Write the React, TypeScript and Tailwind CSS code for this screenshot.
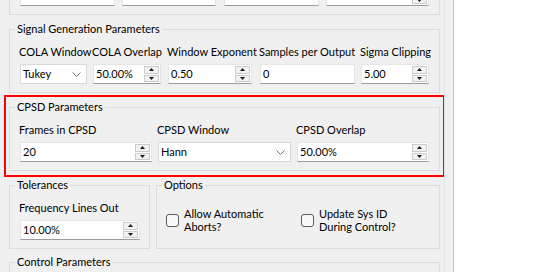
import React from 'react';

const font = "font-['Lato',sans-serif]";

const UpArrow = () => (
  <svg width="5" height="3" viewBox="0 0 5 3"><path d="M0 3 L2.5 0 L5 3 Z" fill="#1a1a1a" /></svg>
);
const DownArrow = () => (
  <svg width="5" height="3" viewBox="0 0 5 3"><path d="M0 0 L2.5 3 L5 0 Z" fill="#1a1a1a" /></svg>
);

const Spin = ({ value, w }: { value: string; w: string }) => (
  <div className={`flex h-[20px] ${w} bg-white border border-[#e6e6e6] border-b-[#9c9c9c]`}>
    <span className="flex-1 pl-[2px] leading-[18px] whitespace-nowrap overflow-hidden">{value}</span>
    <div className="flex flex-col w-[15px] my-px mr-px gap-px">
      <div className="flex-1 flex items-center justify-center bg-[#f2f2f2] border border-[#cccccc]"><UpArrow /></div>
      <div className="flex-1 flex items-center justify-center bg-[#f2f2f2] border border-[#cccccc]"><DownArrow /></div>
    </div>
  </div>
);

const TextBox = ({ value, w }: { value: string; w: string }) => (
  <div className={`h-[20px] ${w} bg-white border border-[#e6e6e6] border-b-[#9c9c9c] pl-[2px] leading-[18px]`}>
    {value}
  </div>
);

const Combo = ({ value, w }: { value: string; w: string }) => (
  <div className={`flex items-center h-[20px] ${w} bg-white border border-[#d9d9d9] pl-[2px]`}>
    <span className="flex-1 leading-[18px]">{value}</span>
    <svg width="9" height="5" viewBox="0 0 9 5" className="mr-[5px]">
      <path d="M0.5 0.5 L4.5 4.5 L8.5 0.5" fill="none" stroke="#707070" strokeWidth="1" />
    </svg>
  </div>
);

const Group = ({ title, className, children }: { title: string; className?: string; children?: React.ReactNode }) => (
  <fieldset className={`border border-[#dcdcdc] min-w-0 ${className ?? ''}`}>
    <legend className="ml-[5px] px-[2px] leading-[14px] whitespace-nowrap">{title}</legend>
    {children}
  </fieldset>
);

// one label + control column
const Field = ({ label, className, children }: { label: string; className: string; children: React.ReactNode }) => (
  <div className={`flex flex-col shrink-0 ${className}`}>
    <div className="h-[15px] leading-[15px] -ml-px mb-[5px] whitespace-nowrap">{label}</div>
    {children}
  </div>
);

const CheckItem = ({ lines, className }: { lines: string[]; className?: string }) => (
  <div className={`flex items-center ${className ?? ''}`}>
    <div className="w-[13px] h-[13px] rounded-[3px] border border-[#5c5c5c] bg-[#f9f9f9] shrink-0" />
    <div className="ml-[5px] leading-[13px]">
      {lines.map((l) => (
        <div key={l} className="whitespace-nowrap">{l}</div>
      ))}
    </div>
  </div>
);

export default function App() {
  return (
    <div className={`flex w-[539px] h-[272px] overflow-hidden bg-white text-[11px] text-black ${font}`}>
      {/* scrolled parameter panel */}
      <div className="w-[445px] h-full bg-[#f0f0f0] border-r border-[#e4e4e4] overflow-hidden shrink-0">
        <div className="flex flex-col pl-[9px]">
          {/* group scrolled mostly out of view */}
          <Group title="Sweep Parameters" className="w-[431px] h-[71px] mt-[-56px]">
            <div className="flex pl-[10px] pt-[8px]">
              <Field label="Start" className="w-[102px]"><TextBox value="0.00" w="w-[95px]" /></Field>
              <Field label="Count" className="w-[102px]"><TextBox value="0" w="w-[94px]" /></Field>
              <Field label="Stop" className="w-[102px]"><TextBox value="0.00" w="w-[95px]" /></Field>
              <Field label="Rate" className="w-[103px]"><Spin value="0.00" w="w-[103px]" /></Field>
            </div>
          </Group>

          <Group title="Signal Generation Parameters" className="w-[431px] h-[71px] mt-[7px]">
            <div className="flex pl-[10px] pt-[8px]">
              <Field label="COLA Window" className="w-[73px]"><Combo value="Tukey" w="w-[67px]" /></Field>
              <Field label="COLA Overlap" className="w-[75px]"><Spin value="50.00%" w="w-[68px]" /></Field>
              <Field label="Window Exponent" className="w-[92px]"><Spin value="0.50" w="w-[84px]" /></Field>
              <Field label="Samples per Output" className="w-[101px]"><TextBox value="0" w="w-[95px]" /></Field>
              <Field label="Sigma Clipping" className="w-[68px]"><Spin value="5.00" w="w-[68px]" /></Field>
            </div>
          </Group>

          {/* highlighted section */}
          <div className="w-[441px] -ml-[5px] mt-[2px] border-2 border-[#ff0000] pt-[3px] pb-[4px] pl-[3px]">
            <Group title="CPSD Parameters" className="w-[431px] h-[71px]">
              <div className="flex pl-[10px] pt-[8px]">
                <Field label="Frames in CPSD" className="w-[138px]"><Spin value="20" w="w-[132px]" /></Field>
                <Field label="CPSD Window" className="w-[139px]"><Combo value="Hann" w="w-[133px]" /></Field>
                <Field label="CPSD Overlap" className="w-[132px]"><Spin value="50.00%" w="w-[132px]" /></Field>
              </div>
            </Group>
          </div>

          <div className="flex mt-[1px] gap-[6px]">
            <Group title="Tolerances" className="w-[141px] h-[71px]">
              <div className="flex pl-[10px] pt-[8px]">
                <Field label="Frequency Lines Out" className="w-[120px]"><Spin value="10.00%" w="w-[120px]" /></Field>
              </div>
            </Group>
            <Group title="Options" className="w-[284px] h-[71px]">
              <div className="flex pl-[9px] pt-[15px]">
                <CheckItem lines={['Allow Automatic', 'Aborts?']} className="w-[135px]" />
                <CheckItem lines={['Update Sys ID', 'During Control?']} />
              </div>
            </Group>
          </div>

          <Group title="Control Parameters" className="w-[431px] h-[71px] mt-[6px]" />
        </div>
      </div>
      <div className="w-[9px] h-full bg-[#f0f0f0] border-r border-[#c6c6c6] shrink-0" />
      <div className="flex-1 bg-white" />
    </div>
  );
}
